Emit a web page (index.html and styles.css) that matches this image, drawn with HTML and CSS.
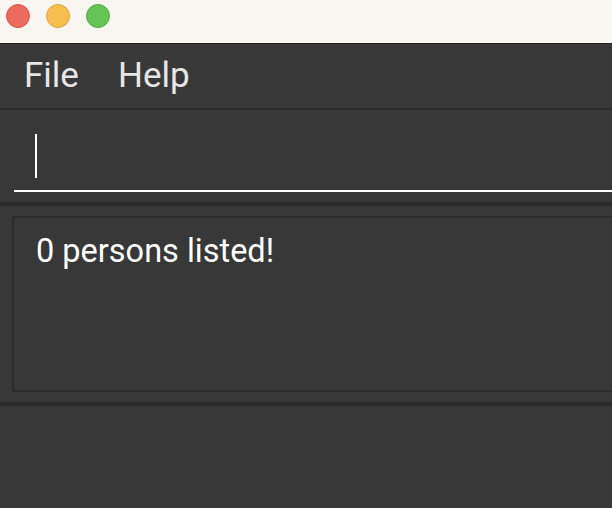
FILE: index.html
```html
<!DOCTYPE html>
<html>
<head>
<meta charset="utf-8">
<link rel="stylesheet" href="styles.css">
</head>
<body>
<div class="window">
  <div class="titlebar">
    <span class="light red"></span>
    <span class="light yellow"></span>
    <span class="light green"></span>
  </div>
  <div class="menubar">
    <span class="menu-item">File</span>
    <span class="menu-item">Help</span>
  </div>
  <div class="command">
    <div class="command-input">
      <span class="caret"></span>
    </div>
  </div>
  <div class="result">
    <div class="result-box">
      <p class="result-text">0 persons listed!</p>
    </div>
  </div>
  <div class="list"></div>
</div>
</body>
</html>
```

FILE: styles.css
```css
html, body {
  margin: 0;
  padding: 0;
  background: #383838;
}

.window {
  width: 612px;
  height: 508px;
  overflow: hidden;
  display: flex;
  flex-direction: column;
  font-family: Roboto, "Liberation Sans", sans-serif;
  background: #383838;
}

.titlebar {
  flex: none;
  height: 44px;
  box-sizing: border-box;
  background: #f9f6f1;
  border-bottom: 1px solid #1e1e1e;
  display: flex;
  align-items: flex-start;
  gap: 16px;
  padding: 4px 0 0 6px;
}

.light {
  width: 24px;
  height: 24px;
  border-radius: 50%;
  box-sizing: border-box;
}
.red { background: #ee6a5f; border: 1px solid #d9574c; }
.yellow { background: #f6be4f; border: 1px solid #dea53a; }
.green { background: #62c554; border: 1px solid #51ad44; }

.menubar {
  flex: none;
  height: 66px;
  box-sizing: border-box;
  border-bottom: 2px solid #2b2b2b;
  display: flex;
  align-items: center;
  gap: 39px;
  padding-left: 24px;
}

.menu-item {
  color: #e6e6e6;
  font-size: 35px;
  line-height: 40px;
}

.command {
  flex: none;
  height: 96px;
  box-sizing: border-box;
  border-bottom: 4px solid #2b2b2b;
  padding-left: 14px;
}

.command-input {
  height: 82px;
  box-sizing: border-box;
  border-bottom: 2px solid #ffffff;
  padding: 24px 0 0 21px;
}

.caret {
  display: block;
  width: 2px;
  height: 44px;
  background: #ffffff;
}

.result {
  flex: none;
  height: 200px;
  box-sizing: border-box;
  border-bottom: 4px solid #2b2b2b;
  padding: 10px 0 0 12px;
}

.result-box {
  height: 176px;
  margin-right: -30px;
  box-sizing: border-box;
  border: 2px solid #2b2b2b;
  padding: 13px 0 0 22px;
}

.result-text {
  margin: 0;
  color: #ffffff;
  font-size: 32.5px;
  line-height: 40px;
}

.list {
  flex: 1;
}
```
